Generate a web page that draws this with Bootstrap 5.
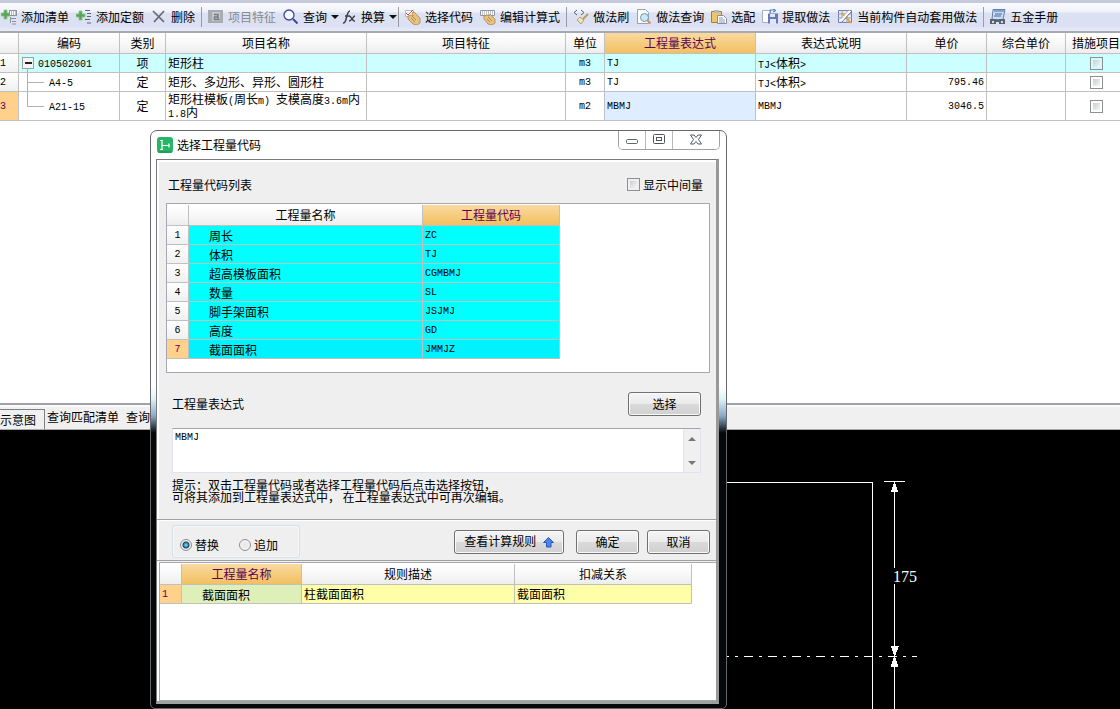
<!DOCTYPE html>
<html lang="zh-CN">
<head>
<meta charset="utf-8">
<meta name="viewport" content="width=device-width, initial-scale=1">
<title>选择工程量代码</title>
<link rel="stylesheet" href="https://cdn.jsdelivr.net/npm/bootstrap@5.3.0/dist/css/bootstrap.min.css">
<style>
body{font:12px/12px "Noto Sans CJK SC",sans-serif;color:#000;background:#fff}
.app{height:100vh;min-height:600px}
.lat{font-family:"Liberation Mono","Noto Sans CJK SC",monospace;font-size:10px}
span.lat{line-height:8px}
/* toolbar */
.tools{height:33px;gap:7px;padding:3px 0 0 1px;border-bottom:2px solid #a6a9b0;background:linear-gradient(#c5c9da 0 3px,#fafbfe 3px,#eef1fa 12px,#dce2f2 13px,#dbe1f3 26px,#e8edf9)}
.tool{display:flex;align-items:center;gap:4px;flex:none;border:0;background:none;padding:0;color:#000;line-height:16px;white-space:nowrap}
.tool:disabled{color:#8a8a8e}
.tool svg{width:16px;height:16px;flex:none}
.tool.drop{margin-right:-5px}
.tool.drop::after{content:"";border:4px solid transparent;border-top-color:#111;border-bottom:0;width:8px}
.vsep{width:1px;height:20px;margin:0 -1px;background:#9a9ca4;flex:none}
/* data grids */
.sheet{table-layout:fixed;border-collapse:separate;border-spacing:0}
.sheet th,.sheet td{border:solid #c0c0c0;border-width:0 1px 1px 0;padding:0 2px;height:19px;white-space:nowrap;overflow:hidden;vertical-align:middle}
.sheet td.lat,.sheet tbody th.lat{padding-top:2px}
.sheet thead th{height:21px;font-weight:400;text-align:center;background:linear-gradient(#fff,#f8f8f8 50%,#ededed)}
.sheet tbody th{font-weight:400;background:linear-gradient(#fff,#f0f0f0);text-align:center}
.sheet thead th.hot{background:linear-gradient(#fad9a1,#f1c05f);color:#5b0058}
.sheet tbody th.hot{background:#ffd18b;color:#5b0058}
.main-sheet{width:calc(100% + 7px)}
.main-sheet tbody th{text-align:left;padding:0}
.main-sheet .first td{background:#cff}
.main-sheet .tall>*{height:29px}
.main-sheet td.picked{background:#deedff}
.main-sheet td.tree{padding:0 0 0 3px}
.tree svg{display:block;flex:none}
.tick{appearance:none;width:13px;height:13px;margin:0;border:1px solid #8e8f8f;background:linear-gradient(135deg,#c9cdd3,#f6f6f6) content-box #f4f4f4;padding:2px;display:block;flex:none}
/* lower tabs and canvas */
.tabs{height:27px;gap:7px;background:#f0f0f0;border-top:2px solid #a0a0a8;border-bottom:1px solid #aaa;box-shadow:inset 0 2px #fafafa}
.tabs a{color:#000;text-decoration:none;white-space:nowrap;line-height:16px}
.tabs a.on{border:solid #808080;border-width:1px 1px 0 0;height:20px;width:45px;line-height:20px;margin-right:-5px}
.cad{height:279px;background:#000}
/* dialog */
.dlg{top:130px;left:150px;width:577px;bottom:0;border:1px solid #66686c;border-radius:7px 7px 5px 5px;padding:0 7px 4px 5px;background:linear-gradient(#fff 0 255px,#def3f6 268px,#8aa9c6 285px,#050709 302px)}
.dlg-title{height:28px;padding-left:1px}
.cap{border:1px solid #a0a0a4;border-top:0;border-radius:0 0 5px 5px;height:19px;margin-right:-1px;overflow:hidden}
.cap button{border:0;border-right:1px solid #b8b8bc;background:#fff;padding:0;display:grid;place-items:center;width:27px}
.cap button:last-child{width:46px;border-right:0}
.pane{border:1px solid #77797c;border-right:3px solid #999;border-bottom:3px solid #9ea29f;background:#efefef;box-shadow:inset 2px 2px #fff}
.codes{padding:18px 6px 0 9px}
.codes-head{padding:0 7px 12px 2px}
.codes-head label{gap:3px}
.listbox{border:1px solid #a8a9b0;background:#fff;height:170px;padding-top:1px}
.code-sheet{width:393px}
.code-sheet td{background:#0ff}
.code-sheet tr.low td{background:#00f2ff}
.sheet td.name-cell{padding:2px 0 0 20px}
.formula{padding:19px 15px 16px 15px}
.key{height:24px;border:1px solid #707070;border-radius:3px;padding:0;color:#000;background:linear-gradient(#f4f4f4,#ebebeb 48%,#dadada 50%,#d0d0d0);box-shadow:inset 0 0 0 1px #fbfbfb;white-space:nowrap}
.key-mid{width:63px}
.key-pick{width:73px}
.key-rules{width:110px;margin-right:4px}
.expr{height:45px;margin:12px 0 6px;border:1px solid #dfe4ec;border-top-color:#a4a5a8;background:#fff}
.expr textarea{border:0;resize:none;outline:0;padding:3px 2px;overflow:hidden;line-height:12px}
.scroller{width:17px;background:#f0f0f0;border-left:1px solid #e4e4e4;padding:7px 0 6px}
.band{height:42px;border-top:1px solid #a0a0a0;border-bottom:1px solid #a0a0a0;box-shadow:inset 0 1px #fff;padding:3px 6px 0 15px}
.modes{border:1px solid #d5dfe5;border-radius:3px;width:128px;height:33px;box-shadow:inset 0 0 0 1px #f8f8f8;padding:6px 0 0 7px}
.modes label{gap:3px}
.dot{appearance:none;width:12px;height:12px;margin:0;border:1px solid #8e8f8f;border-radius:50%;background:radial-gradient(#e4e4e4,#fafafa)}
.dot:checked{background:radial-gradient(circle at 50% 50%,#5cc8ee 0 1px,#12455f 3px,#eee 4px)}
.rules{border:1px solid #a8a9b0;border-right:0;background:#fff;margin:1px 0 0 2px;padding-top:1px}
.rules-sheet{width:532px}
.rules-sheet td{background:#ffffa8}
.rules-sheet td.name-cell{background:#deefb8}
</style>
<script src="https://cdn.jsdelivr.net/npm/bootstrap@5.3.0/dist/js/bootstrap.bundle.min.js"></script>
</head>
<body>
<div class="app position-relative d-flex flex-column overflow-hidden">

<nav class="tools d-flex align-items-center flex-shrink-0 overflow-hidden" aria-label="工具栏">
  <button class="tool"><svg viewBox="0 0 16 16"><path d="M3 1h3v3h3v3H6v3H3V7H0V4h3z" fill="#57a55a" stroke="#8dc58c" stroke-width=".8"/><rect x="8.500" y="1.500" width="7" height="5" fill="#fff" stroke="#8b93a6"/><path d="M10 3h5M10 5h5" stroke="#6d7893" stroke-dasharray="1 1"/><path d="M9 9.500h6M11 12.500h4M11 15h4M9.500 8v6" stroke="#8d949f"/></svg>添加清单</button>
  <button class="tool"><svg viewBox="0 0 16 16"><path d="M3 2h3v3h3v3H6v3H3V8H0V5h3z" fill="#57a55a" stroke="#8dc58c" stroke-width=".8"/><path d="M9 1.500h5M11 4.500h4M11 7.500h4M9 10.500h5M11 14h4" stroke="#5f6570"/></svg>添加定额</button>
  <button class="tool"><svg viewBox="0 0 16 16"><path d="M2 2l11 11M13 2L3 13" stroke="#666a70" stroke-width="1.700" fill="none"/></svg>删除</button>
  <span class="vsep"></span>
  <button class="tool" disabled><svg viewBox="0 0 16 16"><rect y="1" width="15" height="13" fill="#a9abb2"/><rect x="4" y="3" width="8" height="9" fill="#c6c8ce"/><path d="M6 5.500h4v5H6.500v-2.500H10M9.500 10.500h2" stroke="#777b83" stroke-width="1.500" fill="none"/></svg>项目特征</button>
  <button class="tool drop"><svg viewBox="0 0 16 16"><circle cx="6" cy="6" r="5" fill="#f4f8ff" stroke="#3c4698" stroke-width="1.300"/><path d="M10 10l4.500 4.500" stroke="#3c4698" stroke-width="2"/></svg>查询</button>
  <button class="tool drop"><svg viewBox="0 0 16 16"><path d="M2 14c4 1 3-12 7-12M4 7h5M8 7c3 0 3 6 6 5M14 7c-2 0-3 5-6 5" stroke="#3d4048" stroke-width="1.500" fill="none"/></svg>换算</button>
  <span class="vsep"></span>
  <button class="tool"><svg viewBox="0 0 16 16"><path d="M.5 1.500h8v6h-8z" fill="#fff" stroke="#b8b8c0"/><path d="M1 4l2 2 5-5" stroke="#e0503a" fill="none"/><path d="M3 7l3-1 2 1-1-3 2-1 6 6v5l-3 2-4-1-5-5z" fill="#e5c284" stroke="#af8648" stroke-width=".8"/><path d="M7 7l4 4M6 9l4 4" stroke="#b18a50"/></svg>选择代码</button>
  <button class="tool"><svg viewBox="0 0 16 16"><path d="M.5 1.500h14v5H.5z" fill="#fff" stroke="#8f95a5"/><path d="M2 3h12M2 5h12" stroke="#80889c" stroke-dasharray="1 1"/><path d="M4 7l3-1 2 1 1-2 5 5v4l-3 2-4-1-4-5z" fill="#e5c284" stroke="#af8648" stroke-width=".8"/><path d="M8 8l4 4M7 10l3 3" stroke="#b18a50"/></svg>编辑计算式</button>
  <span class="vsep"></span>
  <button class="tool"><svg viewBox="0 0 16 16"><path d="M4 1L1 3.500 4 6M8 1l3 2.500L8 6" stroke="#5a6078" fill="none"/><path d="M15 5L10 10" stroke="#c49a51" stroke-width="2"/><path d="M7 8l4 3-3 4-4-4z" fill="#f1e2ba" stroke="#a78e60" stroke-width=".8"/></svg>做法刷</button>
  <button class="tool"><svg viewBox="0 0 16 16"><path d="M1.500.5h8l3 3v11h-11z" fill="#fff" stroke="#98a0b8"/><circle cx="8.500" cy="8.500" r="4" fill="#c9e7f5" stroke="#7295ad"/><path d="M11.500 11.500l3 3" stroke="#d29445" stroke-width="2"/></svg>做法查询</button>
  <button class="tool"><svg viewBox="0 0 16 16"><path d="M.5 2.500h10v11H.5z" fill="#edc56b" stroke="#a77e35"/><path d="M3 1h5v3H3z" fill="#b6b7bd"/><path d="M6.500 6.500h6l3 3v5h-9z" fill="#fff" stroke="#888da5"/><path d="M8 9h4M8 11h6M8 13h6" stroke="#8e98b4"/></svg>选配</button>
  <button class="tool"><svg viewBox="0 0 16 16"><path d="M.5 1.500h8v12h-8z" fill="#fff" stroke="#a6afc6"/><path d="M6 4.500h10v10H6z" fill="#6778b4"/><path d="M8 10h6v5H8zM8 5h5v3H8z" fill="#e1e6f5"/><path d="M8 4V1h5M11 0l3 1.500L11 3" stroke="#4a79bd" fill="none"/></svg>提取做法</button>
  <button class="tool"><svg viewBox="0 0 16 16"><path d="M1.500 1.500h13v12h-13z" fill="#e7ecfa" stroke="#7180ae"/><path d="M1 5h14M1 9h14M5 1v13M10 1v13" stroke="#8c99c0"/><path d="M5 4l9 10" stroke="#dfa642" stroke-width="2"/><path d="M13 2L4 12" stroke="#fff" stroke-width="2"/><path d="M14 3L5 13" stroke="#71798c"/></svg>当前构件自动套用做法</button>
  <span class="vsep"></span>
  <button class="tool"><svg viewBox="0 0 16 16"><path d="M3 .5h12l-2 10H2z" fill="#cbdbf1" stroke="#627da9"/><path d="M4 2h10M5 5h7M4 7h7" stroke="#45699f"/><path d="M0 10h6v5H0zM9 10h6v5H9zM5 11h5v2H5z" fill="#5b6270"/><path d="M2 12h2v2H2zM11 12h2v2h-2z" fill="#d8dee8"/></svg>五金手册</button>
</nav>

<main class="flex-grow-1 overflow-hidden">
<table class="sheet main-sheet">
  <colgroup><col style="width:19px"><col style="width:101px"><col style="width:46px"><col style="width:201px"><col><col style="width:39px"><col style="width:151px"><col style="width:151px"><col style="width:80px"><col style="width:79px"><col style="width:61px"></colgroup>
  <thead><tr><th></th><th>编码</th><th>类别</th><th>项目名称</th><th>项目特征</th><th>单位</th><th class="hot">工程量表达式</th><th>表达式说明</th><th>单价</th><th>综合单价</th><th>措施项目</th></tr></thead>
  <tbody>
  <tr class="first"><th class="lat">1</th><td class="tree"><div class="d-flex align-items-center"><svg width="16" height="18"><path d="M5.500 14v4" stroke="#b0b0b0"/><rect x=".5" y="3.500" width="11" height="11" fill="#f4f4f4" stroke="#a0a0a0"/><path d="M3 9h7" stroke="#222" stroke-width="2"/></svg><span class="lat pt-1">010502001</span></div></td><td class="text-center">项</td><td>矩形柱</td><td></td><td class="lat text-center">m3</td><td class="lat">TJ</td><td><span class="lat">TJ&lt;</span>体积<span class="lat">&gt;</span></td><td></td><td></td><td><input type="checkbox" class="tick mx-auto" aria-label="措施项目 1"></td></tr>
  <tr><th class="lat">2</th><td class="tree"><div class="d-flex align-items-center"><svg width="27" height="18"><path d="M5.500 0v18M5.500 9.500H22" stroke="#b0b0b0"/></svg><span class="lat pt-1">A4-5</span></div></td><td class="text-center">定</td><td>矩形、多边形、异形、圆形柱</td><td></td><td class="lat text-center">m3</td><td class="lat">TJ</td><td><span class="lat">TJ&lt;</span>体积<span class="lat">&gt;</span></td><td class="lat text-end">795.46</td><td></td><td><input type="checkbox" class="tick mx-auto" aria-label="措施项目 2"></td></tr>
  <tr class="tall"><th class="lat hot">3</th><td class="tree"><div class="d-flex align-items-center"><svg width="27" height="28"><path d="M5.500 0v14.500H22" stroke="#b0b0b0" fill="none"/></svg><span class="lat pt-1">A21-15</span></div></td><td class="text-center">定</td><td>矩形柱模板<span class="lat">(</span>周长<span class="lat">m) </span>支模高度<span class="lat">3.6m</span>内<br><span class="lat">1.8</span>内</td><td></td><td class="lat text-center">m2</td><td class="lat picked">MBMJ</td><td class="lat">MBMJ</td><td class="lat text-end">3046.5</td><td></td><td><input type="checkbox" class="tick mx-auto" aria-label="措施项目 3"></td></tr>
  </tbody>
</table>
</main>

<nav class="tabs d-flex align-items-end flex-shrink-0" aria-label="视图"><a href="#" class="on">示意图</a><a href="#" class="pb-1">查询匹配清单</a><a href="#" class="pb-1">查询匹配定额</a></nav>
<div class="cad flex-shrink-0">
  <svg width="100%" height="279" fill="none" stroke="#fff" shape-rendering="crispEdges">
    <path d="M600 52.500h272.500V279M884 51.500h21M894.500 52v86M894.500 154v125"/>
    <path d="M727 226.500h190" stroke-dasharray="2 6 3 6 9 6 3 6 9 6 3 6 9 6 3 6 9 6 3 6 9 6 3 6 9 6 3 6 9 6 3 6 9"/>
    <path d="M894.500 53l-3 8h6zM894.500 226l-3-10h7zM894.500 227l-3 9h6z" fill="#fff"/>
    <text x="893" y="152" fill="#fff" stroke="none" font-family="Liberation Serif, serif" font-size="16">175</text>
  </svg>
</div>

<section class="dlg position-absolute d-flex flex-column" role="dialog" aria-labelledby="dlgTitle">
  <header class="dlg-title d-flex justify-content-between flex-shrink-0">
    <div class="d-flex align-items-center gap-1">
      <svg width="16" height="16"><rect width="16" height="16" rx="3" fill="#25b765"/><path d="M1 15h14" stroke="#148c48"/><path d="M3 3.500h3M5 3.500v9M3 12.500h3M5 8.500h7M12 6.500v4" stroke="#fff" stroke-width="1.200" fill="none"/></svg>
      <span id="dlgTitle">选择工程量代码</span>
    </div>
    <div class="cap d-flex">
      <button aria-label="最小化"><svg width="14" height="12"><rect x="1.500" y="5.500" width="11" height="4" rx="1" fill="#fff" stroke="#62656f"/></svg></button>
      <button aria-label="最大化"><svg width="12" height="12"><rect x=".5" y=".5" width="11" height="9" rx="1" fill="#fff" stroke="#50535e"/><rect x="3.500" y="3.500" width="5" height="3" stroke="#50535e" fill="#fff"/></svg></button>
      <button aria-label="关闭"><svg width="12" height="12"><path d="M.5 1h3.500l2 2.500L8 1h3.500L8.500 5.500l3 4.500H8L6 7.500 4 10H.5l3-4.500z" fill="#fff" stroke="#555864"/></svg></button>
    </div>
  </header>

  <div class="pane flex-grow-1 d-flex flex-column">
    <div class="codes flex-shrink-0">
      <div class="codes-head d-flex justify-content-between align-items-center"><span>工程量代码列表</span><label class="d-flex align-items-center"><input type="checkbox" class="tick">显示中间量</label></div>
      <div class="listbox">
        <table class="sheet code-sheet">
          <colgroup><col style="width:22px"><col><col style="width:137px"></colgroup>
          <thead><tr><th></th><th>工程量名称</th><th class="hot">工程量代码</th></tr></thead>
          <tbody>
            <tr><th class="lat">1</th><td class="name-cell">周长</td><td class="lat">ZC</td></tr>
            <tr><th class="lat">2</th><td class="name-cell">体积</td><td class="lat">TJ</td></tr>
            <tr><th class="lat">3</th><td class="name-cell">超高模板面积</td><td class="lat">CGMBMJ</td></tr>
            <tr><th class="lat">4</th><td class="name-cell">数量</td><td class="lat">SL</td></tr>
            <tr><th class="lat">5</th><td class="name-cell">脚手架面积</td><td class="lat">JSJMJ</td></tr>
            <tr><th class="lat">6</th><td class="name-cell">高度</td><td class="lat">GD</td></tr>
            <tr class="low"><th class="lat hot">7</th><td class="name-cell">截面面积</td><td class="lat">JMMJZ</td></tr>
          </tbody>
        </table>
      </div>
    </div>
    <div class="formula flex-shrink-0">
      <div class="d-flex justify-content-between align-items-center"><label for="expr">工程量表达式</label><button class="key key-pick">选择</button></div>
      <div class="expr d-flex">
        <textarea id="expr" class="lat flex-grow-1">MBMJ</textarea>
        <div class="scroller d-flex flex-column justify-content-between align-items-center"><svg width="8" height="5"><path d="M0 5l4-4 4 4z" fill="#777"/></svg><svg width="8" height="5"><path d="M0 0l4 4 4-4z" fill="#777"/></svg></div>
      </div>
      <p class="mb-0">提示：双击工程量代码或者选择工程量代码后点击选择按钮，<br>可将其添加到工程量表达式中， 在工程量表达式中可再次编辑。</p>
    </div>
    <div class="band d-flex align-items-center flex-shrink-0">
      <div class="modes d-flex me-auto">
        <label class="d-flex align-items-center me-3"><input type="radio" name="mode" class="dot" checked>替换</label>
        <label class="d-flex align-items-center ms-1"><input type="radio" name="mode" class="dot">追加</label>
      </div>
      <button class="key key-rules">查看计算规则 <svg class="ms-1" width="11" height="11"><path d="M5.500.5l5 5H8v4.500H3.500V5.500H.5z" fill="#4a86ee" stroke="#2b57b6"/></svg></button>
      <button class="key key-mid ms-2 me-2">确定</button>
      <button class="key key-mid">取消</button>
    </div>
    <div class="rules flex-grow-1">
      <table class="sheet rules-sheet">
        <colgroup><col style="width:22px"><col style="width:120px"><col style="width:213px"><col></colgroup>
        <thead><tr><th></th><th class="hot">工程量名称</th><th>规则描述</th><th>扣减关系</th></tr></thead>
        <tbody><tr><th class="lat hot text-start">1</th><td class="name-cell">截面面积</td><td>柱截面面积</td><td>截面面积</td></tr></tbody>
      </table>
    </div>
  </div>
</section>
</div>
</body>
</html>
